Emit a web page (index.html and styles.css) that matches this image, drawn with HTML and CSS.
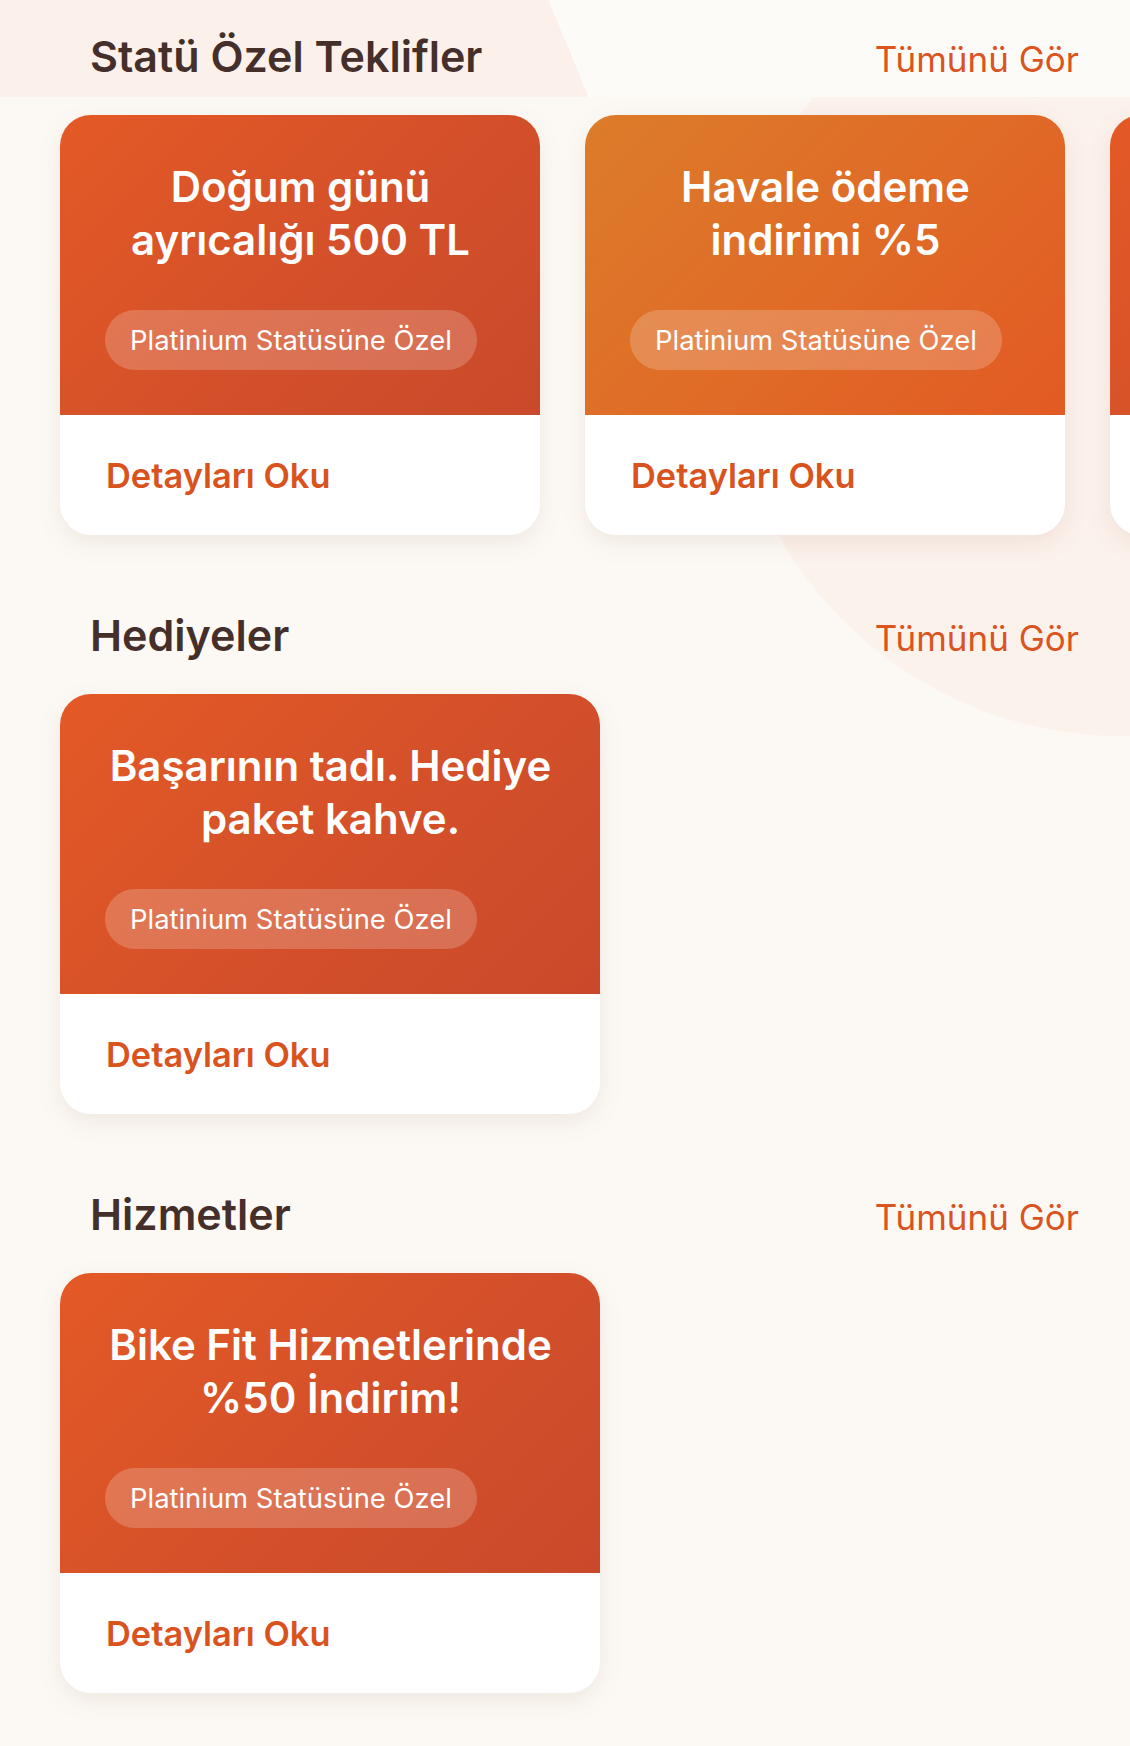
FILE: index.html
```html
<!DOCTYPE html>
<html lang="tr">
<head>
  <meta charset="UTF-8" />
  <meta name="viewport" content="width=device-width, initial-scale=1.0"/>
  <title>Statü Ayrıcalıkları</title>
  <link rel="stylesheet" href="styles.css">
</head>
<body>

<main class="page">

  <section class="offers">
    <div class="section-head">
      <h2>Statü Özel Teklifler</h2>
      <a href="#" class="see-all">Tümünü Gör</a>
    </div>
    <div class="card-row">
      <div class="offer-card">
        <div class="offer-top">
          <h3>Doğum günü ayrıcalığı 500 TL</h3>
          <span class="badge">Platinium Statüsüne Özel</span>
        </div>
        <div class="offer-bottom"><a href="#" class="detail-link">Detayları Oku</a></div>
      </div>

      <div class="offer-card">
        <div class="offer-top amber">
          <h3>Havale ödeme indirimi %5</h3>
          <span class="badge">Platinium Statüsüne Özel</span>
        </div>
        <div class="offer-bottom"><a href="#" class="detail-link">Detayları Oku</a></div>
      </div>

      <!-- next card peeks in from the edge, its content is out of view -->
      <div class="offer-card" aria-hidden="true">
        <div class="offer-top"></div>
        <div class="offer-bottom"></div>
      </div>
    </div>
  </section>

  <section class="offers">
    <div class="section-head">
      <h2>Hediyeler</h2>
      <a href="#" class="see-all">Tümünü Gör</a>
    </div>
    <div class="card-row">
      <div class="offer-card wide">
        <div class="offer-top">
          <h3>Başarının tadı. Hediye paket kahve.</h3>
          <span class="badge">Platinium Statüsüne Özel</span>
        </div>
        <div class="offer-bottom"><a href="#" class="detail-link">Detayları Oku</a></div>
      </div>
    </div>
  </section>

  <section class="offers">
    <div class="section-head">
      <h2>Hizmetler</h2>
      <a href="#" class="see-all">Tümünü Gör</a>
    </div>
    <div class="card-row">
      <div class="offer-card wide">
        <div class="offer-top">
          <h3>Bike Fit Hizmetlerinde %50 İndirim!</h3>
          <span class="badge">Platinium Statüsüne Özel</span>
        </div>
        <div class="offer-bottom"><a href="#" class="detail-link">Detayları Oku</a></div>
      </div>
    </div>
  </section>

</main>

</body>
</html>
```

FILE: styles.css
```css
html, body {
  margin: 0;
  padding: 0;
}

body {
  font-family: Inter, "Noto Sans", sans-serif;
  min-height: 1746px;
  background:
    linear-gradient(67.6deg, #fbf1ea 50.3%, #fdfbf8 50.3%) top left / 100% 97px no-repeat,
    radial-gradient(circle 395px at 1122px 342px, #fcf2ec 99.6%, rgba(252, 242, 236, 0) 100%) no-repeat,
    #fcf9f4;
}

.page {
  width: 1130px;
}

.offers {
  padding-top: 30px;
}

.section-head {
  display: flex;
  justify-content: space-between;
  align-items: baseline;
  padding: 0 51px 0 90px;
}

.section-head h2 {
  margin: 0;
  font-size: 43px;
  line-height: 53px;
  font-weight: 600;
  color: #452f2a;
}

.see-all {
  font-size: 35px;
  font-weight: 400;
  color: #d9541f;
  text-decoration: none;
}

.card-row {
  display: flex;
  gap: 45px;
  overflow: hidden;
  padding: 32px 0 44px 60px;
}

.offer-card {
  flex: none;
  width: 480px;
  border-radius: 31px;
  overflow: hidden;
  background: white;
  box-shadow: 0 8px 26px rgba(110, 60, 30, 0.09);
}

.offer-card.wide {
  width: 540px;
}

.offer-top {
  display: flex;
  flex-direction: column;
  align-items: flex-start;
  height: 300px;
  box-sizing: border-box;
  padding: 45px 44px 0 45px;
  background: linear-gradient(135deg, #e45a26 0%, #d4502a 55%, #c9492a 100%);
}

.offer-top.amber {
  background: linear-gradient(135deg, #dc7c2a 0%, #e06a27 55%, #e25a24 100%);
}

.offer-top h3 {
  align-self: stretch;
  margin: 0 0 44px;
  font-size: 42px;
  line-height: 53px;
  font-weight: 600;
  color: white;
  text-align: center;
}

.badge {
  padding: 13px 25px;
  border-radius: 30px;
  background: rgba(255, 255, 255, 0.2);
  font-size: 27.4px;
  line-height: 34px;
  color: white;
}

.offer-bottom {
  display: flex;
  align-items: center;
  height: 120px;
  padding: 0 46px;
}

.detail-link {
  font-size: 34.4px;
  font-weight: 600;
  color: #d9531f;
  text-decoration: none;
}
```
